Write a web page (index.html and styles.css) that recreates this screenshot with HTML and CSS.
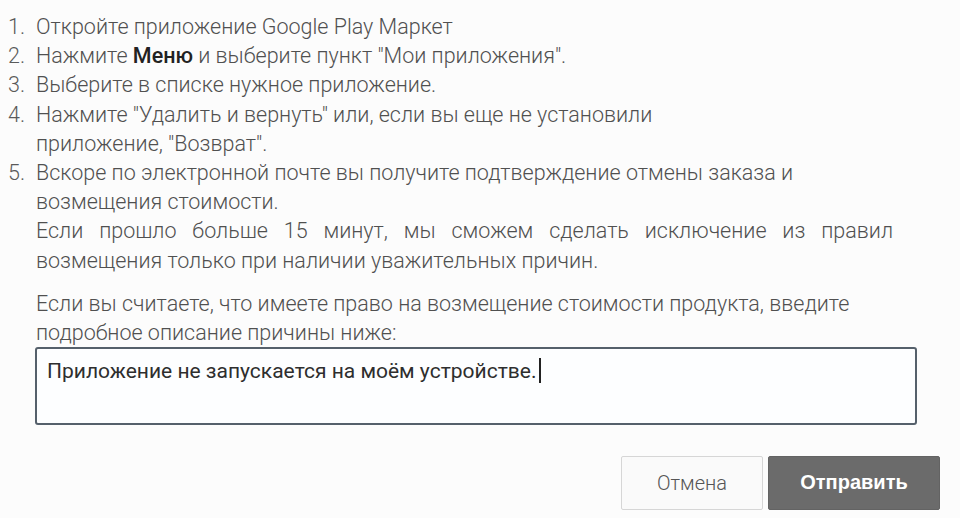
FILE: index.html
```html
<!DOCTYPE html>
<html lang="ru">
<head>
<meta charset="utf-8">
<link rel="stylesheet" href="styles.css">
</head>
<body>
<div class="page">
  <ol class="steps">
    <li class="step"><span class="num">1.</span><span class="txt">Откройте приложение Google Play Маркет</span></li>
    <li class="step"><span class="num">2.</span><span class="txt">Нажмите <b class="strong">Меню</b> и выберите пункт "Мои приложения".</span></li>
    <li class="step"><span class="num">3.</span><span class="txt">Выберите в списке нужное приложение.</span></li>
    <li class="step"><span class="num">4.</span><span class="txt">Нажмите "Удалить и вернуть" или, если вы еще не установили<br>приложение, "Возврат".</span></li>
    <li class="step"><span class="num">5.</span><span class="txt">Вскоре по электронной почте вы получите подтверждение отмены заказа и<br>возмещения стоимости.<span class="just">Если прошло больше 15 минут, мы сможем сделать исключение из правил</span>возмещения только при наличии уважительных причин.</span></li>
  </ol>
  <p class="intro">Если вы считаете, что имеете право на возмещение стоимости продукта, введите<br>подробное описание причины ниже:</p>
  <div class="field">Приложение не запускается на моём устройстве.<span class="caret"></span></div>
  <div class="actions">
    <button class="btn btn-cancel">Отмена</button>
    <button class="btn btn-send">Отправить</button>
  </div>
</div>
</body>
</html>
```
FILE: styles.css
```css
html, body {
  margin: 0;
  padding: 0;
  background: #fcfcfc;
}
body {
  width: 960px;
  height: 518px;
  overflow: hidden;
  font-family: Roboto, "Liberation Sans", sans-serif;
  font-weight: 300;
  font-size: 21.5px;
  color: #505050;
}
.page {
  padding: 12px 0 0 8px;
}
.steps {
  list-style: none;
  margin: 0;
  padding: 0;
}
.step {
  display: flex;
  line-height: 29.2px;
}
.num {
  width: 28px;
  flex: none;
  color: #5a5a5a;
}
.txt {
  display: block;
}
.strong {
  font-weight: 500;
  color: #222;
}
.just {
  display: block;
  width: 857px;
  text-align: justify;
  text-align-last: justify;
}
.intro {
  margin: 14px 0 0 28px;
  line-height: 29px;
}
.field {
  margin: 0 0 0 27px;
  width: 868px;
  height: 62px;
  border: 2px solid #55606b;
  border-radius: 3px;
  background: #fdfeff;
  padding: 7px 0 5px 10px;
  font-size: 21px;
  font-weight: 400;
  color: #2e2e2e;
  line-height: 30px;
}
.caret {
  display: inline-block;
  width: 2px;
  height: 25px;
  background: #222;
  vertical-align: -5px;
  margin-left: 3px;
}
.actions {
  display: flex;
  justify-content: flex-end;
  gap: 5px;
  margin-top: 31px;
  padding-right: 20px;
}
.btn {
  height: 54px;
  font-size: 20px;
  border-radius: 2px;
  cursor: pointer;
}
.btn-cancel {
  width: 142px;
  background: #fafafa;
  border: 1px solid #d6d6d6;
  color: #555;
  font-family: Roboto, "Liberation Sans", sans-serif;
  font-weight: 300;
}
.btn-send {
  width: 172px;
  background: #6b6b6b;
  border: 1px solid #636363;
  color: #fff;
  font-family: "Liberation Sans", Arial, sans-serif;
  font-weight: 700;
}
```
